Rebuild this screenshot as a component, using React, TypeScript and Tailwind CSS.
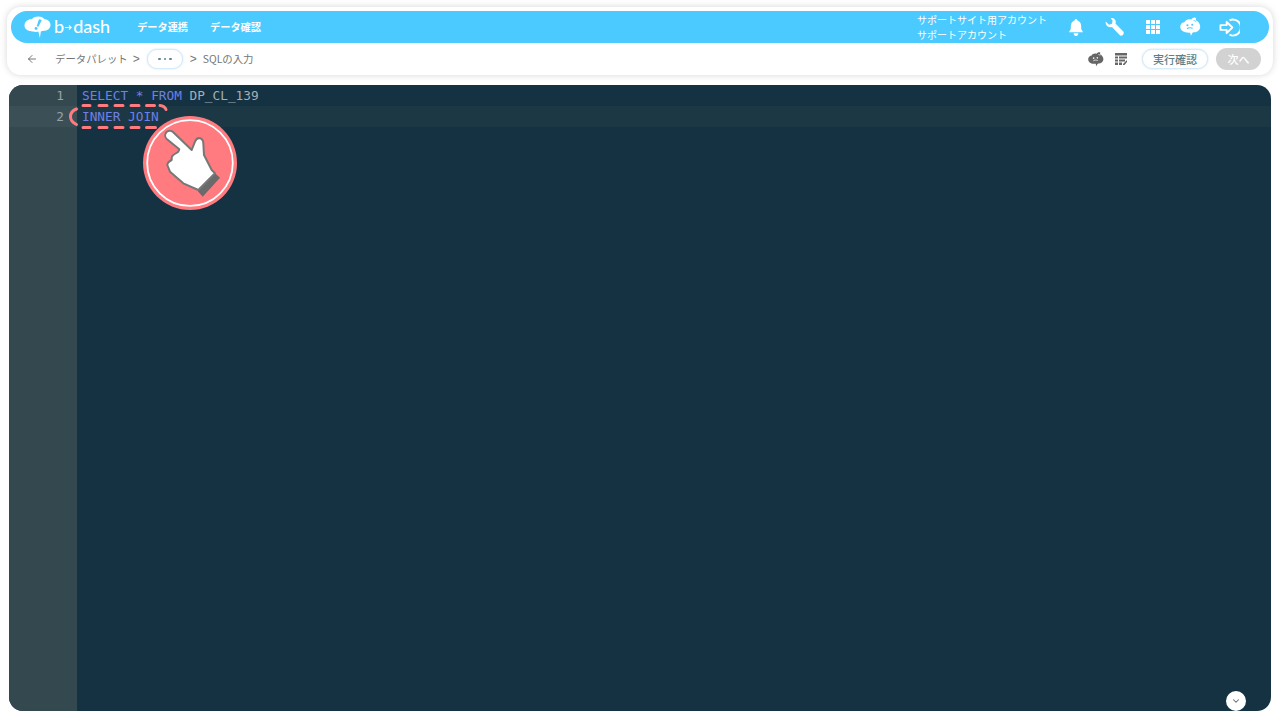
import { ArrowLeft, ChevronDown } from "lucide-react"

const jp = "font-['Noto_Sans_CJK_JP','Noto_Sans',sans-serif]"

function Cloud({ className, face }: { className?: string; face: string }) {
  return (
    <svg viewBox="0 0 24 22" className={className}>
      <path
        d="M5 5.500C6.500 2.500 10 1.500 13 2.500 14 .5 17 -.5 18.500 1c-.5 1-.5 1.500 0 2.500 3 1.500 5 5 4.500 8-.5 3.500-3.500 5.500-7 5.500-1 0-1.500.5-2 1l-1.500 3-1-3.500c-3 .2-6.500-.2-8.500-1.800C.5 14-.5 10.500 1 8c.8-1.500 2.500-2.500 4-2.500z"
        fill="currentColor"
      />
      <path d="M15.500 3.500c1 0 2 .5 3 1.500" stroke={face} strokeWidth="1" fill="none" />
      <circle cx="8.500" cy="9" r="1.200" fill={face} />
      <circle cx="14" cy="8.500" r="1.200" fill={face} />
      <path d="M8 13c2-1.400 4-1.400 6.500-.5" stroke={face} strokeWidth="1.200" fill="none" />
    </svg>
  )
}

function Logo() {
  return (
    <div className="flex items-center text-white">
      <svg viewBox="0 0 28 24" className="w-[27px] h-[23px]">
        <path
          d="M8 3.500C10-.5 19-.5 21 3c4.500.5 7 3.500 6.500 7-.4 3.500-3.500 5.500-7 5.500-1 0-2 .5-3 .8L16.500 23l-1.500-6.500c-3 .3-6 .2-8-.8C2.500 15.500 0 12.500.500 9 1 5.500 4.500 3 8 3.500z"
          fill="currentColor"
        />
        <path d="M15.500 3.500l3 .8-3.500 7-1.800-.6z" fill="#4acaff" />
        <circle cx="12.500" cy="13" r="1.500" fill="#4acaff" />
      </svg>
      <span className="ml-[3px] flex items-center font-['Lato',sans-serif] text-[18px] leading-none font-medium relative top-[-1px]">
        b
        <svg viewBox="0 0 8 8" className="w-[7px] h-[7px] mx-[1px] relative top-[1px]" fill="none" stroke="currentColor" strokeWidth="1.300">
          <path d="M0 4h7M4.500 1.500L7 4 4.500 6.500" />
        </svg>
        dash
      </span>
    </div>
  )
}

function Hand() {
  return (
    <svg viewBox="-1 -1 94 94" className="w-[94px] h-[94px]">
      <circle cx="46" cy="46" r="47" fill="#ff7b80" />
      <circle cx="46" cy="46" r="42.800" fill="none" stroke="#fff" strokeWidth="1.800" />
      <path d="M71 56.300L76 60.700 58.700 79.700 53.700 74z" fill="#6a6a6a" />
      <path
        d="M22.500 15c2-2 5-1.500 6.500 0L47.700 33l3.300-8.300c1-2.500 3-4 5-3.400 2.500.8 3.300 2.500 3.300 5L60 38l7.700 15L71 56.300 54.300 73l-15-6.700L26 54.700l-2.700-6.700c0-2 2.500-4 4.400-5-.3-2 .2-4 1.600-5 1.500-1.200 3.500-2 5-3.300l1-2.400L23 22.300c-2.200-2-2.500-5-.5-7.300z"
        fill="#fff"
        stroke="#777"
        strokeWidth="2"
        strokeLinejoin="round"
      />
    </svg>
  )
}

function DashedMark() {
  return (
    <svg viewBox="0 0 102 28" className="w-[102px] h-[28px]" fill="none" stroke="#ff7b80" strokeWidth="3" strokeLinecap="round">
      <path d="M15 3.500h7M31 3.500h8M47 3.500h8M63 3.500h8M78.500 3.500h8M92 3.500c3 .3 5 1.500 6 4" />
      <path d="M15 25.500h7M31 25.500h8M47 25.500h8M63 25.500h8M78.500 25.500h9" />
      <path d="M8.500 7c-8 3-8 12 0 15.500" />
    </svg>
  )
}

export default function App() {
  return (
    <div className={`w-[1280px] h-[720px] overflow-hidden bg-white pt-[7px] ${jp}`}>
      <div className="mx-[7px] h-[68px] rounded-[14px] bg-white p-[4px] shadow-[0_0_7px_rgba(0,0,0,0.16)]">
        <div className="h-[32px] rounded-full bg-[#4acaff] flex items-center pl-[13px] pr-[29px] text-white">
          <Logo />
          <nav className="flex items-center gap-[22px] ml-[27px] text-[10.200px] font-bold">
            <span>データ連携</span>
            <span>データ確認</span>
          </nav>
          <div className="ml-auto w-[151px] text-[10px] leading-[15px]">
            <div>サポートサイト用アカウント</div>
            <div>サポートアカウント</div>
          </div>
          <div className="flex items-center">
            <svg viewBox="0 0 16 18" className="w-[16px] h-[17px]">
              <path d="M8 0c1 0 1.500.8 1.500 1.500C12 2.200 13.500 4.500 13.500 7.500v3l2 3.500H.5l2-3.500v-3C2.500 4.500 4 2.200 6.500 1.500 6.500.8 7 0 8 0zM5.500 15h5c0 1.500-1 3-2.500 3s-2.500-1.500-2.500-3z" fill="currentColor" />
            </svg>
            <svg viewBox="0 0 20 20" className="w-[19px] h-[19px] ml-[21px]">
              <path d="M6 .3c2.500-.8 5 1 5.300 3.500 0 .8 0 1.500-.3 2L19 14c1 1 1 2.500 0 3.700-1.200 1.200-2.800 1.200-3.800 0L7.300 9.500c-2.500.8-5.300-.6-6.300-3C.6 5.500.6 4.500.8 3.600L4.200 7 7.300 6 8 3z" fill="currentColor" />
            </svg>
            <div className="grid grid-cols-3 gap-[1px] w-[14px] h-[14px] ml-[22px]">
              {Array.from({ length: 9 }).map((_, i) => (
                <span key={i} className="bg-white" />
              ))}
            </div>
            <Cloud className="w-[21px] h-[20px] ml-[20px]" face="#4acaff" />
            <svg viewBox="0 0 22 20" className="w-[21px] h-[19px] ml-[18px]" fill="none" stroke="currentColor" strokeWidth="2">
              <path d="M11 2.500c1-.5 2-1 3.500-1a8.500 8.500 0 010 17c-1.500 0-2.500-.5-3.500-1" />
              <path d="M1.500 7.500H8V4l6 6-6 6v-3.500H1.500z" strokeLinejoin="round" />
            </svg>
          </div>
        </div>
        <div className="h-[32px] flex items-center pl-[15px] pr-[8px] text-[10.400px] text-[#757575]">
          <ArrowLeft className="w-[12px] h-[12px] text-[#666]" strokeWidth={1.800} />
          <span className="ml-[17px]">データパレット</span>
          <span className="ml-[5px] text-[12px] font-['Liberation_Sans',sans-serif]">&gt;</span>
          <div className="ml-[7px] w-[36px] h-[20px] rounded-full bg-white border border-[#d8ebf8] shadow-[0_0_2px_rgba(74,170,230,0.35)] flex items-center justify-center gap-[3px]">
            <span className="w-[2.500px] h-[2.500px] rounded-full bg-[#5d8590]" />
            <span className="w-[2.500px] h-[2.500px] rounded-full bg-[#5d8590]" />
            <span className="w-[2.500px] h-[2.500px] rounded-full bg-[#5d8590]" />
          </div>
          <span className="ml-[7px] text-[12px] font-['Liberation_Sans',sans-serif]">&gt;</span>
          <span className="ml-[6px]">SQLの入力</span>
          <div className="ml-auto flex items-center">
            <Cloud className="w-[16px] h-[15px] text-[#666]" face="#fff" />
            <svg viewBox="0 0 13 12" className="w-[13px] h-[12px] ml-[11px]">
              <path d="M0 0h12v2.500H0zM0 3.500h3v2H0zM4 3.500h8v2H4zM0 6.500h3v2H0zM4 6.500h6v2H4zM0 9.500h3V12H0zM4 9.500h3V12H4zM8 11l4-4v2l-2.500 3H8z" fill="#666" />
            </svg>
            <div className="ml-[14px] w-[66px] h-[20px] rounded-full bg-white border border-[#d8ebf8] shadow-[0_0_2px_rgba(74,170,230,0.35)] flex items-center justify-center text-[#5d7f88] text-[11px] font-medium">
              実行確認
            </div>
            <div className="ml-[8px] w-[45px] h-[22px] rounded-full bg-[#d2d2d2] flex items-center justify-center text-white text-[11px] font-medium">
              次へ
            </div>
          </div>
        </div>
      </div>

      <div className="relative mx-[9px] mt-[10px] h-[626px] rounded-[14px] bg-[#153243] overflow-hidden flex font-['DejaVu_Sans_Mono',monospace] text-[12.750px] leading-[21px]">
        <div className="w-[68px] bg-[#34494f] text-[#98a3a6] text-right pr-[13px]">
          <div>1</div>
          <div className="bg-[#3a5056] -mr-[13px] pr-[13px]">2</div>
        </div>
        <div className="flex-1">
          <div className="pl-[5px] text-[#a3b0b4]">
            <span className="text-[#7080e6]">SELECT</span> <span className="text-[#7080e6]">*</span> <span className="text-[#7080e6]">FROM</span> DP_CL_139
          </div>
          <div className="pl-[5px] bg-[#1c3845] text-[#7080e6]">INNER JOIN</div>
        </div>

        <div className="absolute left-[59px] top-[17px]">
          <DashedMark />
        </div>
        <div className="absolute left-[134px] top-[31px]">
          <Hand />
        </div>
        <div className="absolute right-[25px] bottom-0 w-[20px] h-[20px] rounded-full bg-white flex items-center justify-center text-[#666]">
          <ChevronDown className="w-[10px] h-[10px]" strokeWidth={2.500} />
        </div>
      </div>
    </div>
  )
}
